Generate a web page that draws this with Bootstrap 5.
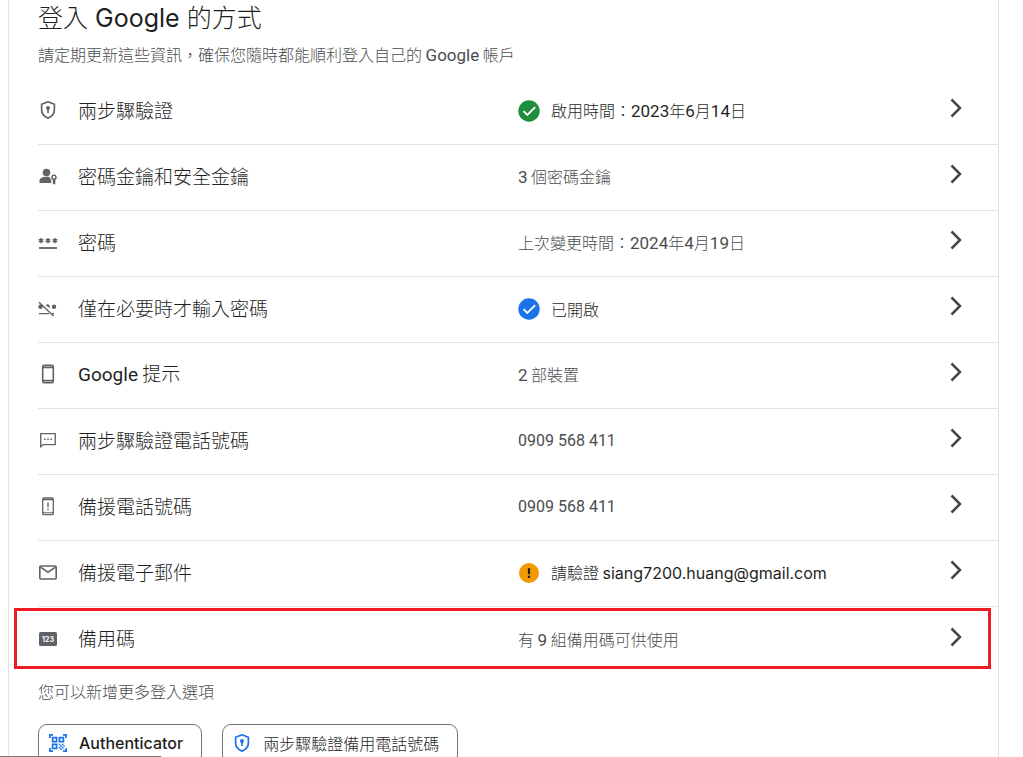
<!DOCTYPE html>
<html lang="zh-Hant">
<head>
<meta charset="utf-8">
<meta name="viewport" content="width=device-width, initial-scale=1">
<title>登入 Google 的方式</title>
<link rel="stylesheet" href="https://cdn.jsdelivr.net/npm/bootstrap@5.3.0/dist/css/bootstrap.min.css">
<style>
  body { font-family: Roboto, "Noto Sans CJK TC", sans-serif; font-size: 16px; line-height: 24px; color: #1f1f1f; background: #fff; }
  .cjk { font-family: "Noto Sans CJK TC", sans-serif; font-weight: 300; }
  .num { font-family: Roboto, sans-serif; font-size: 17px; font-weight: 400; }
  .phone-no { font-size: 16px; }
  .mail-no { font-family: Inter, sans-serif; font-size: 16px; }
  .panel { margin: 0 24px 0 8px; border: 1px solid #e1e3e4; border-width: 0 1px; padding-left: 29px; }
  .panel-title { font-size: 25px; line-height: 32px; font-weight: 300; }
  .panel-title .brand { font-family: Inter, sans-serif; font-weight: 400; white-space: pre; }
  .muted { color: #4a4d50; }
  .method { height: 66px; padding-bottom: 2px; color: #1f1f1f; text-decoration: none; border-bottom: 1px solid #e1e3e4; }
  .method:hover { background: #f8f9fa; }
  .method-name { font-size: 19px; gap: 20px; padding-bottom: 2px; }
  .method-name .num { font-size: 19px; }
  .glyph { width: 20px; height: 20px; flex: none; color: #5f6368; }
  .state { width: 22px; height: 22px; flex: none; }
  .detail { gap: 11px; }
  .chevron { width: 12px; height: 20px; margin: 0 36px 5px auto; flex: none; color: #444746; }
  .marked { position: relative; border-bottom: 0; }
  .marked::after { content: ""; position: absolute; inset: 1px 7px 4px -24px; border: 3px solid #ed1c24; pointer-events: none; }
  .more { margin-top: 6px; padding-bottom: 16px; }
  .options { gap: 20px; padding-top: 5px; }
  .option { height: 42px; border: 1px solid #747775; border-radius: 9px; background: #fff; color: #1f1f1f; gap: 11px; padding: 0 18px 4px 9px; font-size: 16px; }
  .option-latin { font-family: Inter, sans-serif; font-weight: 500; }
  .option .glyph { color: #1a73e8; }
  .status-strip { width: 161px; height: 1px; background: #777; left: 0; bottom: 0; }
</style>
</head>
<body class="vh-100 overflow-hidden">
<svg class="d-none" aria-hidden="true">
  <symbol id="shield" viewBox="0 0 20 20"><path d="M10 1.800l6.400 2.400v5.300c0 4-2.600 7.200-6.400 8.600-3.800-1.400-6.400-4.600-6.400-8.600V4.200z" fill="none" stroke="currentColor" stroke-width="1.700" stroke-linejoin="round"/><circle cx="10" cy="8" r="2" fill="currentColor"/><path d="M9.200 9h1.600v4H9.200z" fill="currentColor"/></symbol>
  <symbol id="passkey" viewBox="0 0 20 20"><g fill="currentColor"><circle cx="8.500" cy="6.500" r="3.800"/><path d="M1.500 17v-2.400c0-2.500 3.500-3.800 7-3.800 1.100 0 2.200.1 3.200.4.200 1.200.7 2 1.500 2.600V17z"/><path d="M16 8.500a2.900 2.900 0 0 0-1.200 5.500v3.500l1.300 1.300 1.700-1.700-.9-1.100.9-1-.8-.9a2.900 2.900 0 0 0-1-5.600zm0 1.500a1.300 1.300 0 1 1 0 2.600 1.300 1.300 0 0 1 0-2.600z" fill-rule="evenodd"/></g></symbol>
  <symbol id="password" viewBox="0 0 20 20"><path d="M1 16h18" stroke="currentColor" stroke-width="1.800"/><g stroke="currentColor" stroke-width="1.500"><path id="star" d="M3 6v5.200M.7 7.300l4.600 2.600M.7 9.900l4.600-2.600"/><use href="#star" x="7"/><use href="#star" x="14"/></g></symbol>
  <symbol id="nopassword" viewBox="0 0 20 20"><g fill="currentColor"><circle cx="2.500" cy="8.800" r="2.200"/><circle cx="16" cy="8.800" r="2.200"/><path d="M7.800 7.200a2.200 2.200 0 0 1 3.600 2.700z"/></g><path d="M1 15.600h10M14 15.600h2M1 4.200l14.500 13.800" stroke="currentColor" stroke-width="1.400"/></symbol>
  <symbol id="phone" viewBox="0 0 20 20"><rect x="4.700" y="1.300" width="10.600" height="17.400" rx="1.500" fill="none" stroke="currentColor" stroke-width="1.600"/><path d="M5 3.500h10M5 16.500h10" stroke="currentColor" stroke-width="1.400"/><path d="M5 2.300h10M5 17.700h10" stroke="currentColor" stroke-width="1" opacity=".5"/></symbol>
  <symbol id="sms" viewBox="0 0 20 20"><path d="M2.700 17V3.700h14.600v10.900H5z" fill="none" stroke="currentColor" stroke-width="1.300" stroke-linejoin="round"/><path d="M6 9.200h1.600M9.200 9.200h1.600M12.400 9.200H14" stroke="currentColor" stroke-width="1.500"/></symbol>
  <symbol id="recovery" viewBox="0 0 20 20"><rect x="4.700" y="2" width="10.600" height="16.600" rx="1" fill="none" stroke="currentColor" stroke-width="1.300"/><path d="M5 3.600h10M5 16.800h10" stroke="currentColor" stroke-width="1.100"/><path d="M10 6.500v4.700M10 12.400v1.500" stroke="currentColor" stroke-width="1.400"/></symbol>
  <symbol id="mail" viewBox="0 0 20 20"><rect x="1.800" y="4" width="16.400" height="13" rx="1" fill="none" stroke="currentColor" stroke-width="1.600"/><path d="M2.500 5.200l7.500 5 7.500-5" fill="none" stroke="currentColor" stroke-width="1.600"/></symbol>
  <symbol id="codes" viewBox="0 0 20 20"><rect x="1" y="4" width="18" height="14" rx="1.500" fill="currentColor"/><text x="10" y="13.600" text-anchor="middle" font-family="Inter, sans-serif" font-size="7" font-weight="700" fill="#fff">123</text></symbol>
  <symbol id="qr" viewBox="0 0 20 20"><g fill="none" stroke="currentColor" stroke-width="1.700"><path d="M1.900 5V1.900H5M15 1.900h3.100V5M18.100 15v3.100H15M5 18.100H1.900V15M4.600 4.600h4v4h-4zM11.400 4.600h4v4h-4zM4.600 11.400h4v4h-4z"/></g><path d="M10.700 10.700h1.600v1.600h-1.600zM13.900 10.700h1.600v1.600h-1.600zM12.300 12.300h1.600v1.600h-1.600zM15.500 12.300h1.200v1.600h-1.200zM10.700 13.900h1.600v1.600h-1.600zM13.900 13.900h1.600v1.600h-1.600zM12.300 15.500h1.600V17h-1.600z" fill="currentColor"/></symbol>
  <symbol id="check" viewBox="0 0 22 22"><circle cx="11" cy="11" r="10.700" fill="currentColor"/><path d="M5.500 11.200l3.800 3.800L17.200 7.200" fill="none" stroke="#fff" stroke-width="1.800"/></symbol>
  <symbol id="warn" viewBox="0 0 22 22"><circle cx="11" cy="11" r="10" fill="#f29900"/><path d="M11 6.200v6M11 13.800V16" stroke="#202124" stroke-width="2.200"/></symbol>
  <symbol id="chev" viewBox="0 0 12 20"><path d="M1.500 1.500L10 10l-8.500 8.500" fill="none" stroke="currentColor" stroke-width="2.500"/></symbol>
</svg>

<main class="panel">
  <h1 class="panel-title cjk pt-0 mb-2">登入<span class="brand"> Google </span>的方式</h1>
  <p class="cjk muted mb-2 pb-1">請定期更新這些資訊，確保您隨時都能順利登入自己的 <span class="num">Google</span> 帳戶</p>

  <nav aria-label="登入方式" class="pt-0">
    <a href="#" class="method row g-0 align-items-center">
      <span class="col-6 d-flex align-items-center method-name cjk"><svg class="glyph"><use href="#shield"/></svg>兩步驟驗證</span>
      <span class="col-6 d-flex align-items-center detail cjk"><svg class="state" color="#1e8e3e"><use href="#check"/></svg><span>啟用時間：<span class="num">2023</span>年<span class="num">6</span>月<span class="num">14</span>日</span><svg class="chevron"><use href="#chev"/></svg></span>
    </a>
    <a href="#" class="method row g-0 align-items-center">
      <span class="col-6 d-flex align-items-center method-name cjk"><svg class="glyph"><use href="#passkey"/></svg>密碼金鑰和安全金鑰</span>
      <span class="col-6 d-flex align-items-center detail cjk muted"><span><span class="num">3</span> 個密碼金鑰</span><svg class="chevron"><use href="#chev"/></svg></span>
    </a>
    <a href="#" class="method row g-0 align-items-center">
      <span class="col-6 d-flex align-items-center method-name cjk"><svg class="glyph"><use href="#password"/></svg>密碼</span>
      <span class="col-6 d-flex align-items-center detail cjk muted"><span>上次變更時間：<span class="num">2024</span>年<span class="num">4</span>月<span class="num">19</span>日</span><svg class="chevron"><use href="#chev"/></svg></span>
    </a>
    <a href="#" class="method row g-0 align-items-center">
      <span class="col-6 d-flex align-items-center method-name cjk"><svg class="glyph"><use href="#nopassword"/></svg>僅在必要時才輸入密碼</span>
      <span class="col-6 d-flex align-items-center detail cjk"><svg class="state" color="#1a73e8"><use href="#check"/></svg><span>已開啟</span><svg class="chevron"><use href="#chev"/></svg></span>
    </a>
    <a href="#" class="method row g-0 align-items-center">
      <span class="col-6 d-flex align-items-center method-name cjk"><svg class="glyph"><use href="#phone"/></svg><span><span class="num">Google</span> 提示</span></span>
      <span class="col-6 d-flex align-items-center detail cjk muted"><span><span class="num">2</span> 部裝置</span><svg class="chevron"><use href="#chev"/></svg></span>
    </a>
    <a href="#" class="method row g-0 align-items-center">
      <span class="col-6 d-flex align-items-center method-name cjk"><svg class="glyph"><use href="#sms"/></svg>兩步驟驗證電話號碼</span>
      <span class="col-6 d-flex align-items-center detail muted"><span class="phone-no">0909 568 411</span><svg class="chevron"><use href="#chev"/></svg></span>
    </a>
    <a href="#" class="method row g-0 align-items-center">
      <span class="col-6 d-flex align-items-center method-name cjk"><svg class="glyph"><use href="#recovery"/></svg>備援電話號碼</span>
      <span class="col-6 d-flex align-items-center detail muted"><span class="phone-no">0909 568 411</span><svg class="chevron"><use href="#chev"/></svg></span>
    </a>
    <a href="#" class="method row g-0 align-items-center">
      <span class="col-6 d-flex align-items-center method-name cjk"><svg class="glyph"><use href="#mail"/></svg>備援電子郵件</span>
      <span class="col-6 d-flex align-items-center detail cjk"><svg class="state"><use href="#warn"/></svg><span>請驗證 <span class="mail-no fw-normal">siang7200.huang@gmail.com</span></span><svg class="chevron"><use href="#chev"/></svg></span>
    </a>
    <a href="#" class="method marked row g-0 align-items-center">
      <span class="col-6 d-flex align-items-center method-name cjk"><svg class="glyph"><use href="#codes"/></svg>備用碼</span>
      <span class="col-6 d-flex align-items-center detail cjk muted"><span>有 <span class="num">9</span> 組備用碼可供使用</span><svg class="chevron"><use href="#chev"/></svg></span>
    </a>
  </nav>

  <p class="cjk muted more mb-0">您可以新增更多登入選項</p>
  <div class="d-flex options">
    <button type="button" class="option option-latin d-flex align-items-center"><svg class="glyph"><use href="#qr"/></svg>Authenticator</button>
    <button type="button" class="option d-flex align-items-center cjk"><svg class="glyph"><use href="#shield"/></svg>兩步驟驗證備用電話號碼</button>
  </div>
</main>
<div class="status-strip position-fixed"></div>
<script src="https://cdn.jsdelivr.net/npm/bootstrap@5.3.0/dist/js/bootstrap.bundle.min.js"></script>
</body>
</html>
